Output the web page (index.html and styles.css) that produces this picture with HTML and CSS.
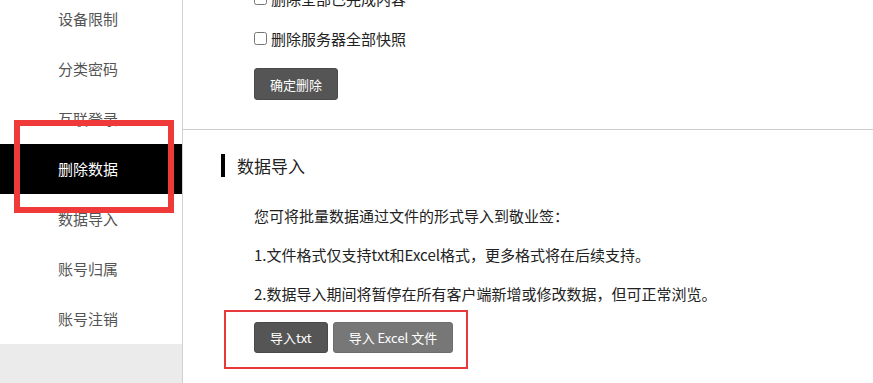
FILE: index.html
```html
<!DOCTYPE html>
<html>
	<head>
		<meta charset="UTF-8">
		<title>删除数据</title>
		<link rel="stylesheet" href="styles.css">
	</head>
	<body>
		<div id="wrap">
			<div class="side">
				<ul class="menu">
					<li>设备限制</li>
					<li>分类密码</li>
					<li>互联登录</li>
					<li class="on">删除数据</li>
					<li>数据导入</li>
					<li>账号归属</li>
					<li>账号注销</li>
				</ul>
			</div>
			<div class="main">
				<div class="sec del">
					<label class="chk"><input type="checkbox">删除全部已完成内容</label>
					<label class="chk"><input type="checkbox">删除服务器全部快照</label>
					<button class="btn">确定删除</button>
				</div>
				<div class="sec imp">
					<h3 class="tit">数据导入</h3>
					<p>您可将批量数据通过文件的形式导入到敬业签：</p>
					<p>1.文件格式仅支持txt和Excel格式，更多格式将在后续支持。</p>
					<p>2.数据导入期间将暂停在所有客户端新增或修改数据，但可正常浏览。</p>
					<div class="btns">
						<button class="btn">导入txt</button>
						<button class="btn light">导入 Excel 文件</button>
					</div>
				</div>
			</div>
		</div>
	</body>
</html>
```

FILE: styles.css
```css
html,body{
	margin: 0;
	padding: 0;
	height: 100%;
	overflow: hidden;
	background: #fff;
}
body{
	font-family: "Noto Sans CJK SC", "Liberation Sans", sans-serif;
	color: #222;
}
ul,li{
	padding: 0;
	margin: 0;
	list-style: none;
}
p,h3{
	margin: 0;
}
#wrap{
	display: flex;
	height: 100%;
	margin-top: -6px;
}
.side{
	width: 182px;
	flex-shrink: 0;
	background: #ebebeb;
	border-right: 1px solid #d0d0d0;
	min-height: 400px;
}
.menu{
	background: #fff;
}
.menu li{
	height: 50px;
	line-height: 50px;
	padding-left: 58px;
	font-size: 15px;
	color: #555;
}
.menu li.on{
	position: relative;
	background: #000;
	color: #fff;
}
.menu li.on:after{
	content: "";
	position: absolute;
	left: 14px;
	right: 8px;
	top: -24px;
	bottom: -19px;
	border: 6px solid #f03a3a;
	box-sizing: border-box;
}
.main{
	flex: 1;
}
.sec{
	padding-left: 71px;
}
.del{
	margin-top: -16px;
	padding-bottom: 29px;
	border-bottom: 1px solid #ccc;
}
.chk{
	display: flex;
	align-items: center;
	height: 40px;
	font-size: 15px;
}
.chk input{
	width: 13px;
	height: 13px;
	margin: 1px 4px 0 0;
}
.btn{
	height: 32px;
	padding: 0 15px;
	border: 1px solid #4a4a4a;
	border-radius: 3px;
	background: #555;
	color: #fff;
	font-family: "Noto Sans CJK SC", "Liberation Sans", sans-serif;
	font-size: 13px;
	margin-top: 10px;
}
.imp{
	padding-top: 23px;
}
.tit{
	display: flex;
	align-items: center;
	margin-left: -33px;
	height: 24px;
	font-size: 17px;
	font-weight: normal;
	color: #222;
}
.tit:before{
	content: "";
	width: 4px;
	height: 23px;
	background: #000;
	margin-right: 12px;
}
.imp p{
	font-size: 15px;
	line-height: 24px;
	margin-top: 15px;
}
.imp p:first-of-type{
	margin-top: 27px;
}
.btns{
	position: relative;
	display: inline-flex;
	gap: 5px;
	margin-top: 16px;
}
.btns .btn{
	margin: 0;
	height: 31px;
}
.btn.light{
	background: #777;
	border-color: #6d6d6d;
}
.btns:after{
	content: "";
	position: absolute;
	left: -30px;
	right: -15px;
	top: -12px;
	bottom: -16px;
	border: 2px solid #e8383c;
}
```
